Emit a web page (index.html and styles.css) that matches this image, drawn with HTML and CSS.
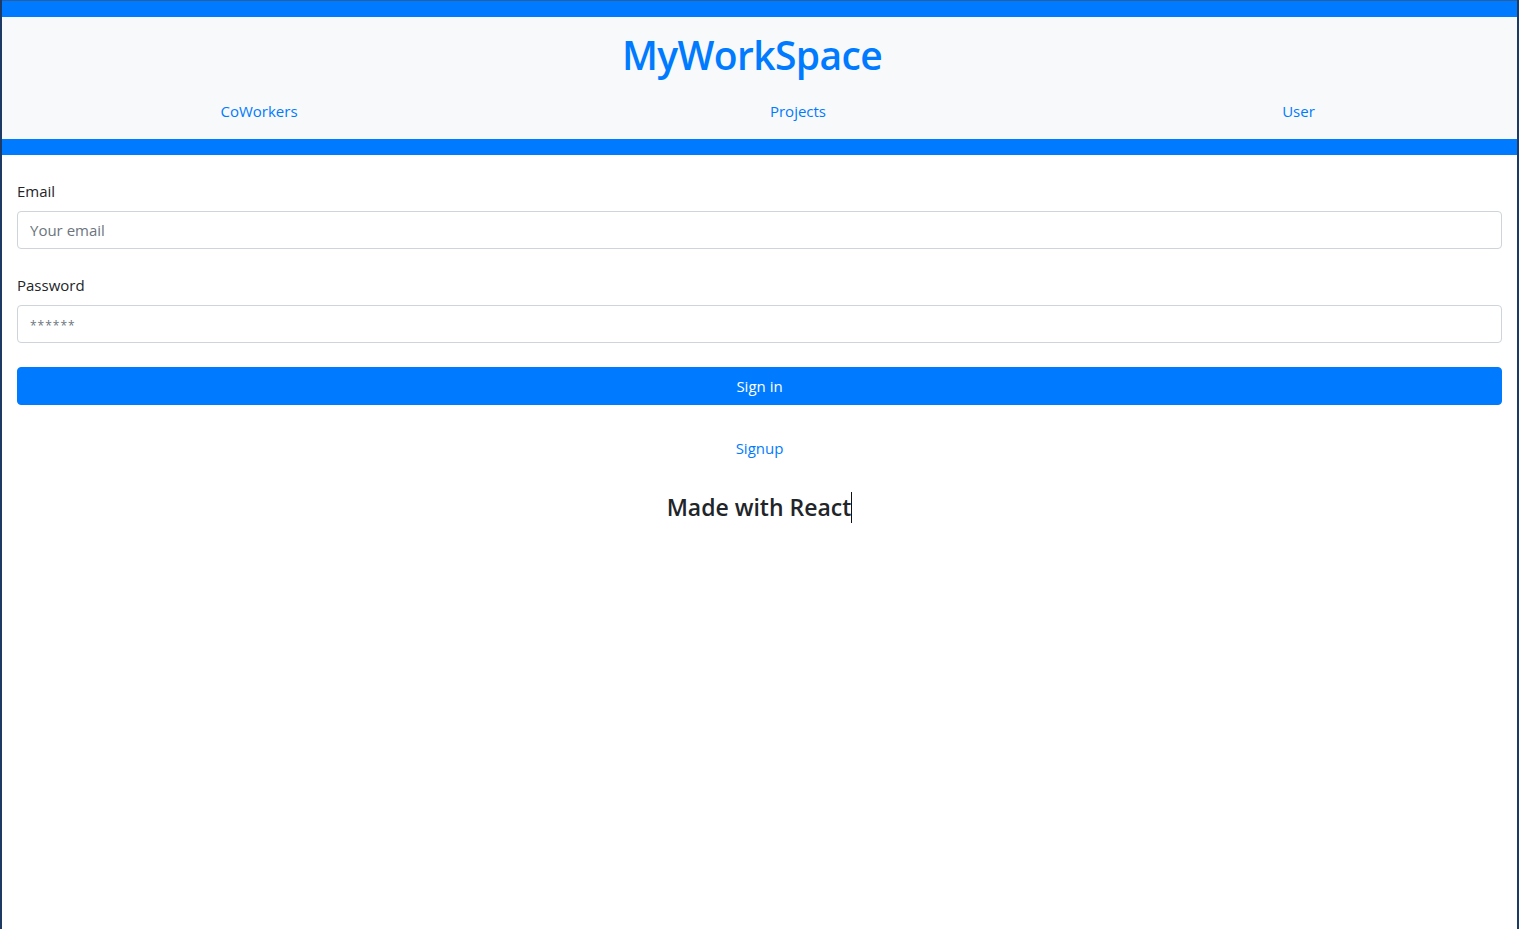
FILE: index.html
```html
<!DOCTYPE html>
<html lang="en">
<head>
<meta charset="utf-8">
<title>MyWorkSpace</title>
<link rel="stylesheet" href="styles.css">
</head>
<body>
<div class="frame">
  <div class="topbar"></div>
  <header class="header">
    <h1 class="brand">MyWorkSpace</h1>
    <nav class="nav">
      <a class="nav-link" href="#">CoWorkers</a>
      <a class="nav-link" href="#">Projects</a>
      <a class="nav-link" href="#">User</a>
    </nav>
  </header>
  <div class="bottombar"></div>
  <main class="content">
    <form class="form">
      <div class="form-group">
        <label class="label" for="email">Email</label>
        <input class="input" id="email" type="email" placeholder="Your email">
      </div>
      <div class="form-group">
        <label class="label" for="password">Password</label>
        <input class="input input-pass" id="password" type="password" placeholder="******">
      </div>
      <button class="btn" type="button">Sign in</button>
    </form>
    <div class="signup"><a class="signup-link" href="#">Signup</a></div>
    <h4 class="made"><span class="made-text">Made with React</span></h4>
  </main>
</div>
</body>
</html>
```

FILE: styles.css
```css
* { box-sizing: border-box; }
html, body { margin: 0; padding: 0; height: 100%; }
body {
  font-family: "Open Sans", "Noto Sans", sans-serif;
  font-size: 16px;
  line-height: 1.5;
  color: #212529;
  background: #fff;
}
.frame {
  min-height: 100%;
  border-left: 2px solid #1d3a64;
  border-right: 2px solid #1d3a64;
  background: #fff;
}
.topbar {
  height: 17px;
  background: #007bff;
  border-top: 1px solid #2b5e9c;
}
.header {
  background: #f8f9fa;
  padding: 14px 0 8px;
}
.brand {
  margin: 0;
  text-align: center;
  font-size: 39px;
  line-height: 48px;
  font-weight: 600;
  color: #007bff;
  padding-right: 15px;
  letter-spacing: -0.6px;
}
.nav {
  margin-top: 12px;
  display: grid;
  grid-template-columns: 514fr 564fr 437fr;
}
.nav-link {
  text-align: center;
  padding: 8px 0;
  color: #007bff;
  text-decoration: none;
  font-size: 15px;
  line-height: 24px;
}
.bottombar {
  height: 16px;
  background: #007bff;
}
.content {
  padding: 24px 15px;
}
.form-group {
  margin-bottom: 24px;
}
.label {
  display: block;
  margin-bottom: 8px;
  font-size: 15px;
  line-height: 24px;
}
.input {
  display: block;
  width: 100%;
  height: 38px;
  padding: 6px 12px;
  font-family: inherit;
  font-size: 15px;
  line-height: 24px;
  color: #495057;
  background: #fff;
  border: 1px solid #ced4da;
  border-radius: 4px;
  outline: none;
}
.input::placeholder { color: #6c757d; opacity: 1; }
.input-pass::placeholder { font-size: 12px; letter-spacing: 1px; }
.btn {
  display: block;
  width: 100%;
  height: 38px;
  padding: 6px 12px;
  font-family: inherit;
  font-size: 15px;
  line-height: 24px;
  color: #fff;
  background: #007bff;
  border: 1px solid #007bff;
  border-radius: 4px;
}
.signup {
  margin-top: 31px;
  text-align: center;
  line-height: 24px;
}
.signup-link {
  color: #007bff;
  text-decoration: none;
  font-size: 15px;
}
.made {
  margin: 32px 0 0;
  text-align: center;
  font-size: 23px;
  line-height: 29px;
  font-weight: 600;
}
.made-text {
  display: inline-block;
  border-right: 1px solid #111;
  line-height: 31px;
}
```
